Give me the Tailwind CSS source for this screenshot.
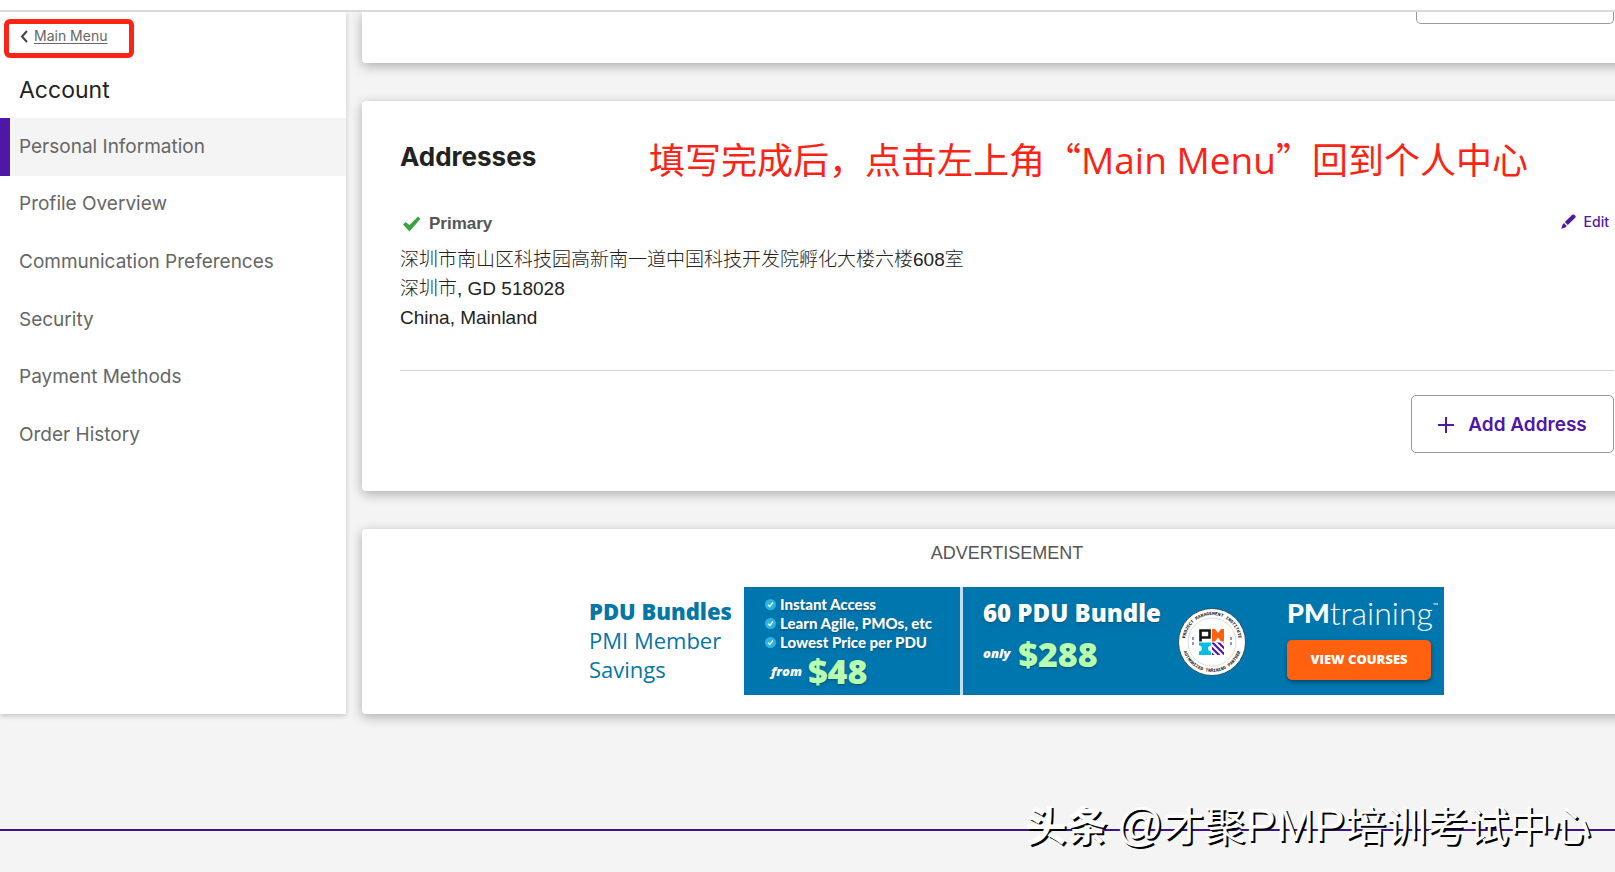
<!DOCTYPE html>
<html lang="en">

<head>
    <meta charset="UTF-8">
    <meta name="viewport" content="width=device-width, initial-scale=1.0">
    <title>Account - Personal Information</title>
    <script src="https://cdn.jsdelivr.net/npm/@tailwindcss/browser@4"></script>
</head>

<body class="bg-[#f4f4f4] font-['Inter','Noto_Sans_CJK_SC',sans-serif] text-[#222] min-h-screen flex flex-col overflow-x-hidden">

    <header class="h-3 bg-white border-b-2 border-[#dadada] relative z-10"></header>

    <div class="flex gap-4 overflow-hidden pb-[115px]">

        <!-- Sidebar -->
        <aside class="w-[346px] shrink-0 bg-white shadow-[0_2px_5px_rgba(0,0,0,0.2)]">
            <div class="pl-1 pt-[7px]">
                <a href="#" class="flex w-[130px] h-[39px] items-start gap-[5px] border-5 border-[#fb2314] rounded-md pt-[3px] pl-[10px] text-[14px] leading-[18px] text-[#666]">
                    <svg class="w-[10px] h-[18px]" viewBox="0 0 10 18" fill="none" stroke="#444" stroke-width="2">
                        <path d="M8 4 3 9.500l5 5.500" />
                    </svg>
                    <span class="underline underline-offset-2">Main Menu</span>
                </a>
            </div>
            <h2 class="px-[19px] pt-[16px] h-[60px] text-[23px] leading-8">Account</h2>
            <nav class="grid grid-rows-6 h-[346px] text-[19px] text-[#666]">
                <a href="#" aria-current="page" class="flex items-center border-l-10 border-[#4f17a8] bg-[#f4f4f4] pl-[9px]">Personal Information</a>
                <a href="#" class="flex items-center pl-[19px]">Profile Overview</a>
                <a href="#" class="flex items-center pl-[19px]">Communication Preferences</a>
                <a href="#" class="flex items-center pl-[19px]">Security</a>
                <a href="#" class="flex items-center pl-[19px]">Payment Methods</a>
                <a href="#" class="flex items-center pl-[19px]">Order History</a>
            </nav>
        </aside>

        <!-- Content, runs past the right edge of the window -->
        <main class="flex-1 min-w-0 -mr-[37px] flex flex-col gap-[38px]">
            <section class="h-[51px] bg-white px-[38px] rounded-b-sm shadow-[0_3px_12px_rgba(0,0,0,0.3)]">
                <button type="button" aria-label="Add" class="block ml-auto w-[198px] h-3 border border-t-0 border-[#999] rounded-b-[5px]"></button>
            </section>

            <section class="bg-white rounded-sm px-[38px] pt-[34px] pb-[38px] shadow-[0_3px_12px_rgba(0,0,0,0.3)]">
                <div class="flex items-center h-[44px]">
                    <h1 class="w-[249px] text-[26px] font-bold leading-10">Addresses</h1>
                    <p lang="zh-CN" class="pt-1 text-[36px] leading-[44px] text-[#fb2314] whitespace-nowrap font-['Noto_Sans_CJK_SC',sans-serif]">填写完成后，点击左上角“<span class="text-[37px] font-['Open_Sans',sans-serif]">Main Menu</span>”回到个人中心</p>
                </div>

                <div class="flex items-start justify-between pt-[28px]">
                    <div class="flex items-center gap-2 h-[34px] pl-[2px] font-['Liberation_Sans',sans-serif] text-[17px] font-bold text-[#555]">
                        <svg class="w-[19px] h-[16px]" viewBox="0 0 19 16" fill="#3fa142">
                            <path d="M1 8.500 3.500 6 7.500 9 16 .5 18.500 2.800 7.500 15.500z" />
                        </svg>
                        Primary
                    </div>
                    <a href="#" class="flex items-center gap-2 pr-[5px] h-7 text-[14px] font-medium text-[#4f17a8]">
                        <svg class="w-[15px] h-[15px]" viewBox="0 0 14 14" fill="#4f17a8">
                            <path d="M10.500.8a1.500 1.500 0 0 1 2 0l.8.8a1.500 1.500 0 0 1 0 2L6.300 10.200 3.600 7.500zM2.700 8.500l2.700 2.700-1.900 1.600L.3 13.700l.9-3.300z" />
                        </svg>
                        Edit
                    </a>
                </div>

                <address lang="zh-CN" class="not-italic pt-1 pb-[38px] border-b border-[#d4d4d4] font-['Liberation_Sans','Noto_Sans_CJK_SC',sans-serif] text-[19px] font-light leading-[29px]">
                    深圳市南山区科技园高新南一道中国科技开发院孵化大楼六楼608室<br>
                    深圳市, GD 518028<br>
                    China, Mainland
                </address>

                <div class="flex justify-end pt-6">
                    <button type="button" class="flex items-center justify-center gap-[14px] w-[203px] h-[58px] pt-[2px] border border-[#999] rounded-[5px] text-[19px] font-semibold text-[#4f17a8]">
                        <svg class="w-4 h-4" viewBox="0 0 16 16" stroke="#4f17a8" stroke-width="2">
                            <path d="M8 0v16M0 8h16" />
                        </svg>
                        Add Address
                    </button>
                </div>
            </section>

            <!-- Advertisement -->
            <section class="bg-white rounded-sm pt-[10px] pb-[19px] shadow-[0_3px_12px_rgba(0,0,0,0.3)]">
                <p class="text-center font-['Liberation_Sans',sans-serif] text-[18px] leading-7 text-[#555]">ADVERTISEMENT</p>
                <div class="flex w-[874px] h-[108px] mx-auto mt-5 font-['Open_Sans',sans-serif]">
                    <div class="w-[174px] pl-[19px] pt-[10px] text-[22px] leading-[29px] text-[#0576a5]">
                        <b class="font-extrabold whitespace-nowrap">PDU Bundles</b><br>PMI Member<br>Savings
                    </div>
                    <div class="w-[219px] bg-[#0076ae] border-r-3 border-[#c5dcea] pt-2 pl-[21px] text-white">
                        <ul class="text-[15px] leading-[19px] font-black font-['Lato',sans-serif] whitespace-nowrap text-shadow-md">
                            <li class="flex items-center gap-1">
                                <svg class="w-[11px] h-[11px]" viewBox="0 0 11 11"><circle cx="5.500" cy="5.500" r="5.500" fill="#27b5df" /><path d="m3 5.800 1.800 1.700L8 3.500" fill="none" stroke="#fff" stroke-width="1.300" /></svg>
                                Instant Access
                            </li>
                            <li class="flex items-center gap-1">
                                <svg class="w-[11px] h-[11px]" viewBox="0 0 11 11"><circle cx="5.500" cy="5.500" r="5.500" fill="#27b5df" /><path d="m3 5.800 1.800 1.700L8 3.500" fill="none" stroke="#fff" stroke-width="1.300" /></svg>
                                Learn Agile, PMOs, etc
                            </li>
                            <li class="flex items-center gap-1">
                                <svg class="w-[11px] h-[11px]" viewBox="0 0 11 11"><circle cx="5.500" cy="5.500" r="5.500" fill="#27b5df" /><path d="m3 5.800 1.800 1.700L8 3.500" fill="none" stroke="#fff" stroke-width="1.300" /></svg>
                                Lowest Price per PDU
                            </li>
                        </ul>
                        <p class="flex items-center gap-[6px] pl-[6px] h-[39px]">
                            <i class="text-[13px] font-extrabold">from</i>
                            <b class="text-[34px] font-extrabold text-[#b9ffb0] text-shadow-md">$48</b>
                        </p>
                    </div>
                    <div class="flex flex-1 bg-[#0076ae] text-white">
                        <div class="w-[197px] pl-5 pt-[10px]">
                            <p class="text-[24px] leading-8 font-extrabold whitespace-nowrap text-shadow-md">60 PDU Bundle</p>
                            <p class="flex items-center gap-2 h-[50px]">
                                <i class="text-[13px] font-extrabold">only</i>
                                <b class="text-[34px] font-extrabold text-[#b9ffb0] text-shadow-md">$288</b>
                            </p>
                        </div>
                        <!-- Training partner seal -->
                        <svg class="w-[70px] h-[70px] mt-5 ml-[17px] font-['Liberation_Mono',monospace]" viewBox="0 0 70 70">
                            <defs>
                                <path id="sealTop" d="M8 35a27 27 0 0 1 54 0" />
                                <path id="sealBottom" d="M5 35a30 30 0 0 0 60 0" />
                                <clipPath id="sealStripes"><path d="M35 35.500h12v12.500H35z" /></clipPath>
                            </defs>
                            <circle cx="35" cy="35" r="33.500" fill="#fff" stroke="#173d51" stroke-width=".8" />
                            <circle cx="35" cy="35" r="24" fill="none" stroke="#bbb" stroke-width=".5" />
                            <g font-size="4.600" font-weight="700" fill="#111" text-anchor="middle">
                                <text><textPath href="#sealTop" startOffset="50%">PROJECT MANAGEMENT INSTITUTE</textPath></text>
                                <text><textPath href="#sealBottom" startOffset="50%">AUTHORIZED TRAINING PARTNER</textPath></text>
                            </g>
                            <path d="M23.500 34.500V23.500h9v7h-9" fill="none" stroke="#111" stroke-width="2.600" />
                            <path d="M35 22h3l3 4 3-4h3v12.500h-3l-3-4-3 4h-3z" fill="#ff610f" />
                            <path d="M22 35.500h12v3c-4 0-4 6 0 6V48H22v-3.500c4 0 4-6 0-6z" fill="#05bfe0" />
                            <g clip-path="url(#sealStripes)" stroke="#4f17a8" stroke-width="2.200">
                                <path d="m30 36 14 14M34 34l16 16M39 33l14 14M25 37l14 14M44 32l8 8" />
                            </g>
                            <path d="M16 30v3m0 2v3M54 30v3m0 2v3" stroke="#777" stroke-width="1.500" />
                        </svg>
                        <div class="pt-3 pl-[40px]">
                            <p class="flex items-center h-[28px] text-[32px] leading-[28px] font-['Lato',sans-serif]"><b class="font-black text-[27px]">PM</b><span class="font-light">training</span><span class="self-start text-[7px] leading-3">™</span></p>
                            <button type="button" class="block w-[144px] h-10 mt-[13px] rounded-[5px] bg-[#ff610f] text-[13px] font-extrabold shadow-[0_2px_4px_rgba(0,0,0,0.4)]">VIEW COURSES</button>
                        </div>
                    </div>
                </div>
            </section>
        </main>
    </div>

    <footer class="relative border-t-2 border-[#3f1585] grow">
        <p lang="zh-CN" class="absolute right-[24px] -top-[36px] whitespace-nowrap text-[41px] leading-[56px] text-white text-shadow-[2px_2px_0_#000] font-['Noto_Sans_CJK_SC',sans-serif]"><b class="font-bold">头条</b> <span class="text-[46px] font-['Liberation_Sans',sans-serif]">@</span>才聚<span class="text-[46px] font-['Liberation_Sans',sans-serif]">PMP</span>培训考试中心</p>
    </footer>
</body>

</html>
